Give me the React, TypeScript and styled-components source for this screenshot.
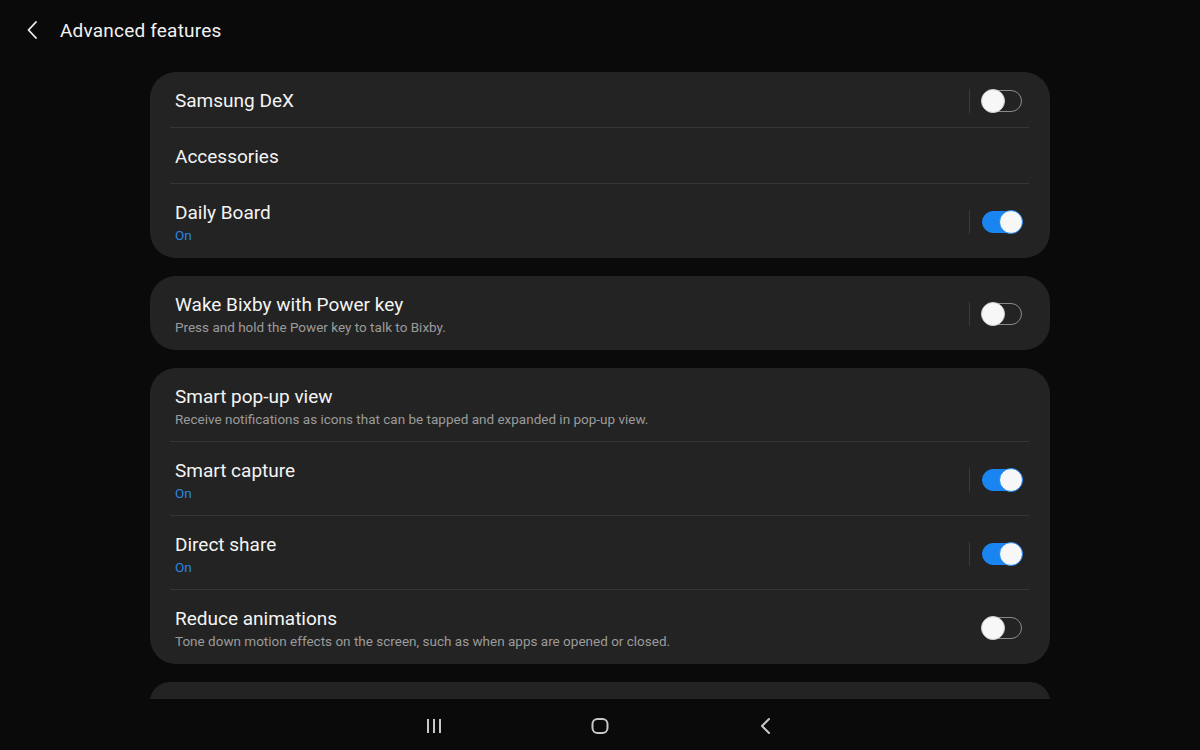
import styled, { createGlobalStyle } from "styled-components"

const GlobalStyle = createGlobalStyle`
    body {
        margin: 0;
        background: #0a0a0a;
        font-family: Roboto, "Noto Sans", sans-serif;
    }
`

const Screen = styled.div`
    width: 1200px;
    height: 750px;
    background: #0a0a0a;
    display: flex;
    flex-direction: column;
    overflow: hidden;
`

const Header = styled.div`
    height: 72px;
    flex-shrink: 0;
    display: flex;
    align-items: flex-start;
    padding: 18px 0 0 26px;
    box-sizing: border-box;
    gap: 22px;
    color: #f2f2f2;
`

const HeaderTitle = styled.h1`
    margin: 0;
    font-size: 19px;
    font-weight: 400;
    line-height: 25px;
    letter-spacing: 0.2px;
`

const Content = styled.div`
    flex: 1;
    overflow: hidden;
    display: flex;
    flex-direction: column;
    gap: 18px;
    padding: 0 150px;
`

const Card = styled.div`
    background: #232323;
    border-radius: 26px;
    display: flex;
    flex-direction: column;
    flex-shrink: 0;
`

const Row = styled.div<{ $divider?: boolean }>`
    position: relative;
    display: flex;
    align-items: center;
    padding: 16px 28px 14px 25px;

    ${({ $divider }) => $divider && `
        &::after {
            content: "";
            position: absolute;
            left: 20px;
            right: 21px;
            bottom: 0;
            height: 1px;
            background: #363636;
        }
    `}
`

const Texts = styled.div`
    flex: 1;
    display: flex;
    flex-direction: column;
`

const Title = styled.div`
    color: #f4f4f4;
    font-size: 19px;
    line-height: 26px;
`

const Sub = styled.div<{ $blue?: boolean }>`
    color: ${({ $blue }) => ($blue ? "#2a86e0" : "#9b9b9b")};
    font-size: 13.5px;
    line-height: 18px;
`

const Separator = styled.div`
    width: 1px;
    height: 24px;
    background: #3a3a3a;
    margin-right: 12px;
`

const Track = styled.div<{ $on: boolean }>`
    position: relative;
    width: 40px;
    height: 22px;
    border-radius: 11px;
    box-sizing: border-box;
    background: ${({ $on }) => ($on ? "#1a85f0" : "transparent")};
    border: 1px solid ${({ $on }) => ($on ? "#1a85f0" : "#8a8a8a")};
`

const Knob = styled.div<{ $on: boolean }>`
    position: absolute;
    top: -2px;
    ${({ $on }) => ($on ? "right: -2px;" : "left: -2px;")}
    width: 24px;
    height: 24px;
    border-radius: 50%;
    background: #f7f7f7;
    box-sizing: border-box;
    border: 1px solid ${({ $on }) => ($on ? "#1a85f0" : "#cfcfcf")};
`

const PeekCard = styled.div`
    height: 40px;
    background: #232323;
    border-radius: 26px;
    flex-shrink: 0;
`

const NavBar = styled.div`
    height: 51px;
    flex-shrink: 0;
    background: #0a0a0a;
    display: flex;
    justify-content: center;
    align-items: center;
    gap: 142px;
    padding-top: 2px;
    box-sizing: border-box;
`

const NavButton = styled.div`
    width: 24px;
    height: 24px;
    display: flex;
    align-items: center;
    justify-content: center;
`

type Item = {
    title: string
    sub?: string
    on?: boolean
    toggle?: boolean
    separator?: boolean
}

const groups: Item[][] = [
    [
        { title: "Samsung DeX", toggle: true, on: false, separator: true },
        { title: "Accessories" },
        { title: "Daily Board", sub: "On", toggle: true, on: true, separator: true },
    ],
    [
        { title: "Wake Bixby with Power key", sub: "Press and hold the Power key to talk to Bixby.", toggle: true, on: false, separator: true },
    ],
    [
        { title: "Smart pop-up view", sub: "Receive notifications as icons that can be tapped and expanded in pop-up view." },
        { title: "Smart capture", sub: "On", toggle: true, on: true, separator: true },
        { title: "Direct share", sub: "On", toggle: true, on: true, separator: true },
        { title: "Reduce animations", sub: "Tone down motion effects on the screen, such as when apps are opened or closed.", toggle: true, on: false },
    ],
]

const Switch = ({ on }: { on: boolean }) => (
    <Track $on={on}>
        <Knob $on={on} />
    </Track>
)

export default function App() {
    return (
        <Screen>
            <GlobalStyle />
            <Header>
                <svg width="12" height="24" viewBox="0 0 12 24">
                    <path d="M10 4 L2.5 12 L10 20" fill="none" stroke="#f2f2f2" strokeWidth="1.8" strokeLinecap="round" strokeLinejoin="round" />
                </svg>
                <HeaderTitle>Advanced features</HeaderTitle>
            </Header>
            <Content>
                {groups.map((items, gi) => (
                    <Card key={gi}>
                        {items.map((item, i) => (
                            <Row key={item.title} $divider={i < items.length - 1}>
                                <Texts>
                                    <Title>{item.title}</Title>
                                    {item.sub && <Sub $blue={item.sub === "On"}>{item.sub}</Sub>}
                                </Texts>
                                {item.separator && <Separator />}
                                {item.toggle && <Switch on={!!item.on} />}
                            </Row>
                        ))}
                    </Card>
                ))}
                <PeekCard />
            </Content>
            <NavBar>
                <NavButton>
                    <svg width="20" height="20" viewBox="0 0 20 20">
                        <path d="M4 3 V17 M10 3 V17 M16 3 V17" stroke="#c8c8c8" strokeWidth="2" />
                    </svg>
                </NavButton>
                <NavButton>
                    <svg width="20" height="20" viewBox="0 0 20 20">
                        <rect x="2.5" y="3" width="15" height="14" rx="5" fill="none" stroke="#c8c8c8" strokeWidth="2" />
                    </svg>
                </NavButton>
                <NavButton>
                    <svg width="20" height="20" viewBox="0 0 20 20">
                        <path d="M13 3 L6 10 L13 17" fill="none" stroke="#c8c8c8" strokeWidth="2" strokeLinecap="round" strokeLinejoin="round" />
                    </svg>
                </NavButton>
            </NavBar>
        </Screen>
    )
}
